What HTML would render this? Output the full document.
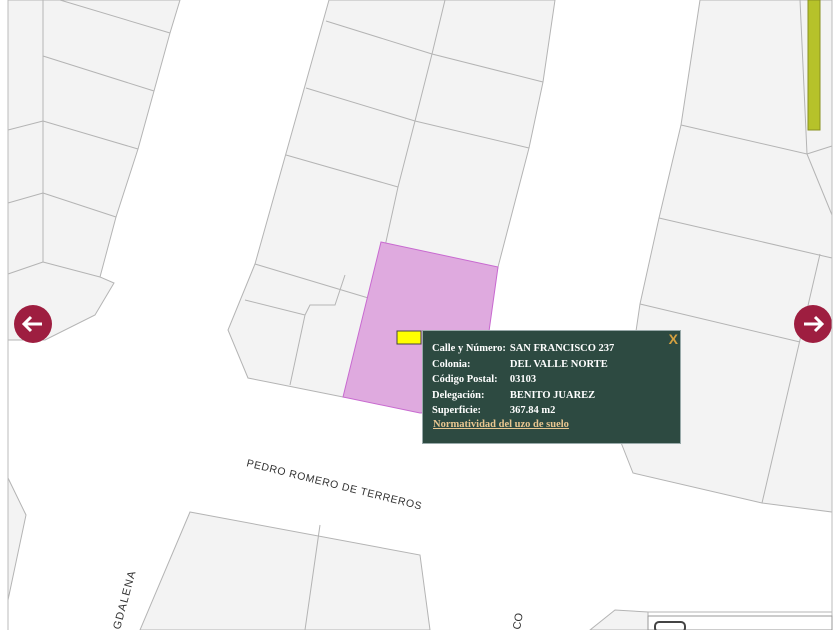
<!DOCTYPE html>
<html><head><meta charset="utf-8"><style>
html,body{margin:0;padding:0;width:840px;height:630px;overflow:hidden;background:#fff;font-family:"Liberation Serif",serif}
#wrap{position:relative;width:840px;height:630px}
.pop{position:absolute;left:422px;top:330px;width:259px;height:114px;background:#2d4a41;border:1px solid #9aa;box-sizing:border-box;color:#fff;font-weight:bold;font-size:10.5px}
.pop table{position:absolute;left:9px;top:10px;border-collapse:collapse}
.pop td{padding:0 4px 0 0;height:15.5px;white-space:nowrap}
.pop a{position:absolute;left:10px;top:88px;color:#e8c690;text-decoration:underline;font-size:10.5px}
.x{position:absolute;right:2px;top:0px;color:#d4a040;font-size:14px;font-family:"Liberation Sans",sans-serif}
</style></head><body><div id="wrap">
<svg width="840" height="630" style="position:absolute;left:0;top:0">
<g fill="#f3f3f3" stroke="#b4b4b4" stroke-width="1">
<polygon points="8,0 180,0 170,33 154,91 138,149 116,217 100,277 114,283 95,315 45,340 8,340"/>
<polygon points="329,0 555,0 543,82 529,148 498,267 468,410 343,397 248,378 228,330 255,264"/>
<polygon points="700,0 832,0 832,512 762,503 633,473 620,440 640,304 659,218 681,125"/>
<polygon points="190,512 420,555 430,630 140,630"/>
<polygon points="590,630 615,610 648,612 648,630"/>
<polygon points="8,478 26,515 8,600"/>
</g>
<g fill="none" stroke="#b4b4b4" stroke-width="1">
<path d="M43,0 L43,262 M60,0 L170,33 M43,56 L154,91 M43,121 L138,149 M43,193 L116,217 M43,262 L100,277 M8,130 L43,121 M8,203 L43,193 M8,274 L43,262"/>
<path d="M445,0 L432,54 L415,121 L398,187 L382,260 M326,21 L432,54 L543,82 M306,88 L415,121 L529,148 M286,155 L398,187 M255,264 L375,300 M245,300 L305,315 L290,385 M305,315 L310,305 L335,305 L345,275"/>
<path d="M800,0 L807,154 M681,125 L807,154 L832,146 M807,154 L832,215 M659,218 L832,258 M640,304 L800,342 M820,254 L762,503"/>
<path d="M320,525 L305,630 M648,612 L832,612"/>
</g>
<polygon points="381,242 498,267 478,410 420,413 343,397" fill="#dfaadf" stroke="#c86ad0" stroke-width="1"/>
<rect x="808" y="0" width="12" height="130" fill="#b6c22a" stroke="#8a9020"/>
<circle cx="33" cy="324" r="19" fill="#9e1e40"/>
<circle cx="813" cy="324" r="19" fill="#9e1e40"/>
<path d="M42,324 H24 M31,317 L24,324 L31,331" stroke="#fff" stroke-width="3" fill="none"/>
<path d="M804,324 H822 M815,317 L822,324 L815,331" stroke="#fff" stroke-width="3" fill="none"/>
<rect x="397" y="331" width="24" height="13" fill="#ffff00" stroke="#444"/>
<line x1="8" y1="0" x2="8" y2="630" stroke="#bbb"/>
<line x1="832" y1="0" x2="832" y2="630" stroke="#bbb"/>
<text x="246" y="466" font-family="Liberation Sans,sans-serif" font-size="10.5" fill="#333" letter-spacing="0.6" transform="rotate(14 246 466)">PEDRO ROMERO DE TERREROS</text>
<text x="120" y="630" font-family="Liberation Sans,sans-serif" font-size="11" fill="#333" letter-spacing="1.2" transform="rotate(-75 120 630)">GDALENA</text>
<text x="520" y="630" font-family="Liberation Sans,sans-serif" font-size="11" fill="#333" transform="rotate(-80 520 630)">CO</text>
<rect x="648" y="616" width="184" height="14" fill="#fff" stroke="#999"/>
<rect x="655" y="622" width="30" height="10" rx="4" fill="none" stroke="#444" stroke-width="2"/>
</svg>
<div class="pop"><span class="x">X</span>
<table>
<tr><td>Calle y Número:</td><td>SAN FRANCISCO 237</td></tr>
<tr><td>Colonia:</td><td>DEL VALLE NORTE</td></tr>
<tr><td>Código Postal:</td><td>03103</td></tr>
<tr><td>Delegación:</td><td>BENITO JUAREZ</td></tr>
<tr><td>Superficie:</td><td>367.84 m2</td></tr>
</table>
<a>Normatividad del uzo de suelo</a>
</div>
</div></body></html>
